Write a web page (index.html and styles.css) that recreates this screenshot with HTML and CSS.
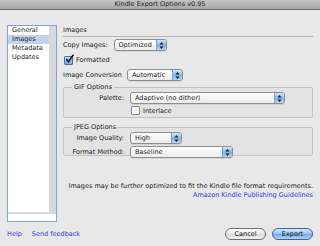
FILE: index.html
```html
<!DOCTYPE html>
<html lang="en">
<head>
    <meta charset="utf-8">
    <title>Kindle Export Options</title>
    <link rel="stylesheet" href="styles.css">
</head>
<body>
    <div class="window">
        <div class="titlebar">Kindle Export Options v0.95</div>

        <div class="main">
            <div class="sidebar">
                <ul class="list">
                    <li>General</li>
                    <li class="selected">Images</li>
                    <li>Metadata</li>
                    <li>Updates</li>
                </ul>
            </div>

            <div class="pane">
                <div class="section-title">Images</div>

                <div class="row copy-row">
                    <span class="label">Copy Images:</span>
                    <div class="popup w-optimized">
                        <span class="value">Optimized</span>
                        <span class="arrows"><svg width="9" height="11" viewBox="0 0 9 11"><polygon points="2.5,4.5 4.5,2 6.5,4.5" /><polygon points="2.5,6.5 4.5,9 6.5,6.5" /></svg></span>
                    </div>
                </div>

                <div class="row check-row">
                    <span class="checkbox checked"><svg width="11" height="11" viewBox="0 0 11 11"><path d="M2.2 5 L4.4 7.8 L9.5 0.8" /></svg></span>
                    <span class="label">Formatted</span>
                </div>

                <div class="row conv-row">
                    <span class="label">Image Conversion</span>
                    <div class="popup w-auto">
                        <span class="value">Automatic</span>
                        <span class="arrows"><svg width="9" height="11" viewBox="0 0 9 11"><polygon points="2.5,4.5 4.5,2 6.5,4.5" /><polygon points="2.5,6.5 4.5,9 6.5,6.5" /></svg></span>
                    </div>
                </div>

                <fieldset class="group gif-group">
                    <legend>GIF Options</legend>
                    <div class="form-grid">
                        <span class="label">Palette:</span>
                        <div class="popup w-palette">
                            <span class="value">Adaptive (no dither)</span>
                            <span class="arrows"><svg width="9" height="11" viewBox="0 0 9 11"><polygon points="2.5,4.5 4.5,2 6.5,4.5" /><polygon points="2.5,6.5 4.5,9 6.5,6.5" /></svg></span>
                        </div>
                        <span></span>
                        <div class="check-inline">
                            <span class="checkbox"></span>
                            <span class="label">Interlace</span>
                        </div>
                    </div>
                </fieldset>

                <fieldset class="group jpeg-group">
                    <legend>JPEG Options</legend>
                    <div class="form-grid">
                        <span class="label">Image Quality:</span>
                        <div class="popup w-high">
                            <span class="value">High</span>
                            <span class="arrows"><svg width="9" height="11" viewBox="0 0 9 11"><polygon points="2.5,4.5 4.5,2 6.5,4.5" /><polygon points="2.5,6.5 4.5,9 6.5,6.5" /></svg></span>
                        </div>
                        <span class="label">Format Method:</span>
                        <div class="popup w-baseline">
                            <span class="value">Baseline</span>
                            <span class="arrows"><svg width="9" height="11" viewBox="0 0 9 11"><polygon points="2.5,4.5 4.5,2 6.5,4.5" /><polygon points="2.5,6.5 4.5,9 6.5,6.5" /></svg></span>
                        </div>
                    </div>
                </fieldset>

                <p class="note">Images may be further optimized to fit the Kindle file format requirements.</p>
                <p class="note"><a href="#">Amazon Kindle Publishing Guidelines</a></p>
            </div>
        </div>

        <div class="footer">
            <div class="links">
                <a href="#">Help</a>
                <a href="#">Send feedback</a>
            </div>
            <div class="buttons">
                <button class="btn">Cancel</button>
                <button class="btn default">Export</button>
            </div>
        </div>
    </div>
</body>
</html>
```

FILE: styles.css
```css
html, body {
    margin: 0;
    padding: 0;
    overflow: hidden;
    width: 100%;
    height: 100%;
}
body {
    background: #e8e8e8;
    font-family: "DejaVu Sans", Verdana, sans-serif;
    font-size: 6.5px;
    color: #1a1a1a;
}
.window {
    width: 320px;
    height: 246px;
    display: flex;
    flex-direction: column;
}
.titlebar {
    height: 9px;
    line-height: 8px;
    text-align: center;
    background: linear-gradient(#c4c4c4, #a8a8a8);
    border-bottom: 1px solid #6c6c6c;
    color: #222;
}
.main {
    display: flex;
    gap: 6px;
    padding: 15px 7px 0 7px;
    height: 197px;
}
.sidebar {
    width: 48px;
    border: 1px solid #86a1cb;
    background: #fff;
    display: flex;
    flex-direction: column;
}
.list {
    list-style: none;
    margin: 0;
    padding: 0;
    flex: 1;
    margin-bottom: 7px;
    border-right: 7px solid #d8d8d8;
    border-bottom: 2px solid #dcdcdc;
}
.list li {
    height: 9px;
    line-height: 9px;
    padding-left: 4px;
}
.list li.selected {
    background: #c3d4ec;
}
.pane {
    flex: 1;
    display: flex;
    flex-direction: column;
}
.section-title {
    margin-top: 1px;
    line-height: 9px;
    padding-bottom: 1px;
    border-bottom: 1px solid #b4b4b4;
}
.row {
    display: flex;
    align-items: center;
    height: 12px;
}
.copy-row {
    margin-top: 2px;
    gap: 6px;
}
.check-row {
    margin-top: 4px;
    height: 10px;
    gap: 3px;
    padding-left: 1px;
}
.conv-row {
    margin-top: 4px;
    gap: 5px;
}
.popup {
    height: 10px;
    border: 1px solid #8e8e8e;
    border-radius: 3px;
    background: linear-gradient(#ffffff, #ebebeb);
    display: flex;
    align-items: center;
    justify-content: space-between;
    box-shadow: 0 1px 0 rgba(0, 0, 0, 0.08);
}
.popup .value {
    padding-left: 4px;
    line-height: 10px;
}
.popup .arrows {
    width: 9px;
    height: 10px;
    border-left: 1px solid #7f9fcf;
    border-radius: 0 2px 2px 0;
    background: linear-gradient(#d4e5fa, #7fb1ec 55%, #b7d5f7);
    display: flex;
    align-items: center;
    justify-content: center;
}
.popup .arrows svg {
    display: block;
    fill: #1d1d1d;
}
.w-optimized { width: 51px; }
.w-auto { width: 54px; }
.w-palette { width: 153px; }
.w-high { width: 50px; }
.w-baseline { width: 101px; }
.checkbox {
    width: 7px;
    height: 7px;
    border: 1px solid #8a8a8a;
    border-radius: 1px;
    background: linear-gradient(#f4f4f4, #ffffff);
    position: relative;
    flex: none;
}
.checkbox.checked {
    border-color: #4d6ea6;
    background: linear-gradient(#c3dbf7, #6ea6e6);
}
.checkbox svg {
    position: absolute;
    left: -1px;
    top: -3px;
    fill: none;
    stroke: #111;
    stroke-width: 1.5;
}
.group {
    margin: 0;
    padding: 0;
    border: 1px solid #c3c3c3;
    border-radius: 2px;
    background: #e3e3e3;
    min-width: 0;
}
.group legend {
    margin-left: 8px;
    padding: 0 2px;
    line-height: 8px;
}
.gif-group {
    margin-top: 2px;
    height: 33px;
}
.jpeg-group {
    margin-top: 5px;
    height: 31px;
}
.form-grid {
    display: grid;
    grid-template-columns: 60px auto;
    column-gap: 6px;
    row-gap: 2px;
    justify-content: start;
    align-items: center;
    padding-top: 1px;
}
.form-grid > .label {
    text-align: right;
}
.check-inline {
    display: flex;
    align-items: center;
    gap: 3px;
    padding-left: 1px;
    height: 9px;
}
.note {
    margin: 0;
    text-align: right;
    line-height: 9px;
}
.note:first-of-type {
    margin-top: 26px;
}
a {
    color: #3434e8;
    text-decoration: none;
}
.footer {
    display: flex;
    justify-content: space-between;
    align-items: center;
    padding: 0 7px;
    margin-top: 5px;
    height: 13px;
}
.links {
    display: flex;
    gap: 10px;
}
.buttons {
    display: flex;
    gap: 6px;
}
.btn {
    width: 41px;
    height: 12px;
    padding: 0;
    font-family: inherit;
    font-size: 6.5px;
    line-height: 10px;
    color: #111;
    border: 1px solid #6e6e6e;
    border-radius: 6px;
    background: linear-gradient(#ffffff, #e6e6e6 50%, #d8d8d8 51%, #f2f2f2);
}
.btn.default {
    border-color: #3f5f9c;
    background: linear-gradient(#d9e9fc, #93c1f2 50%, #6aa6ea 51%, #b4d6fa);
}
```
